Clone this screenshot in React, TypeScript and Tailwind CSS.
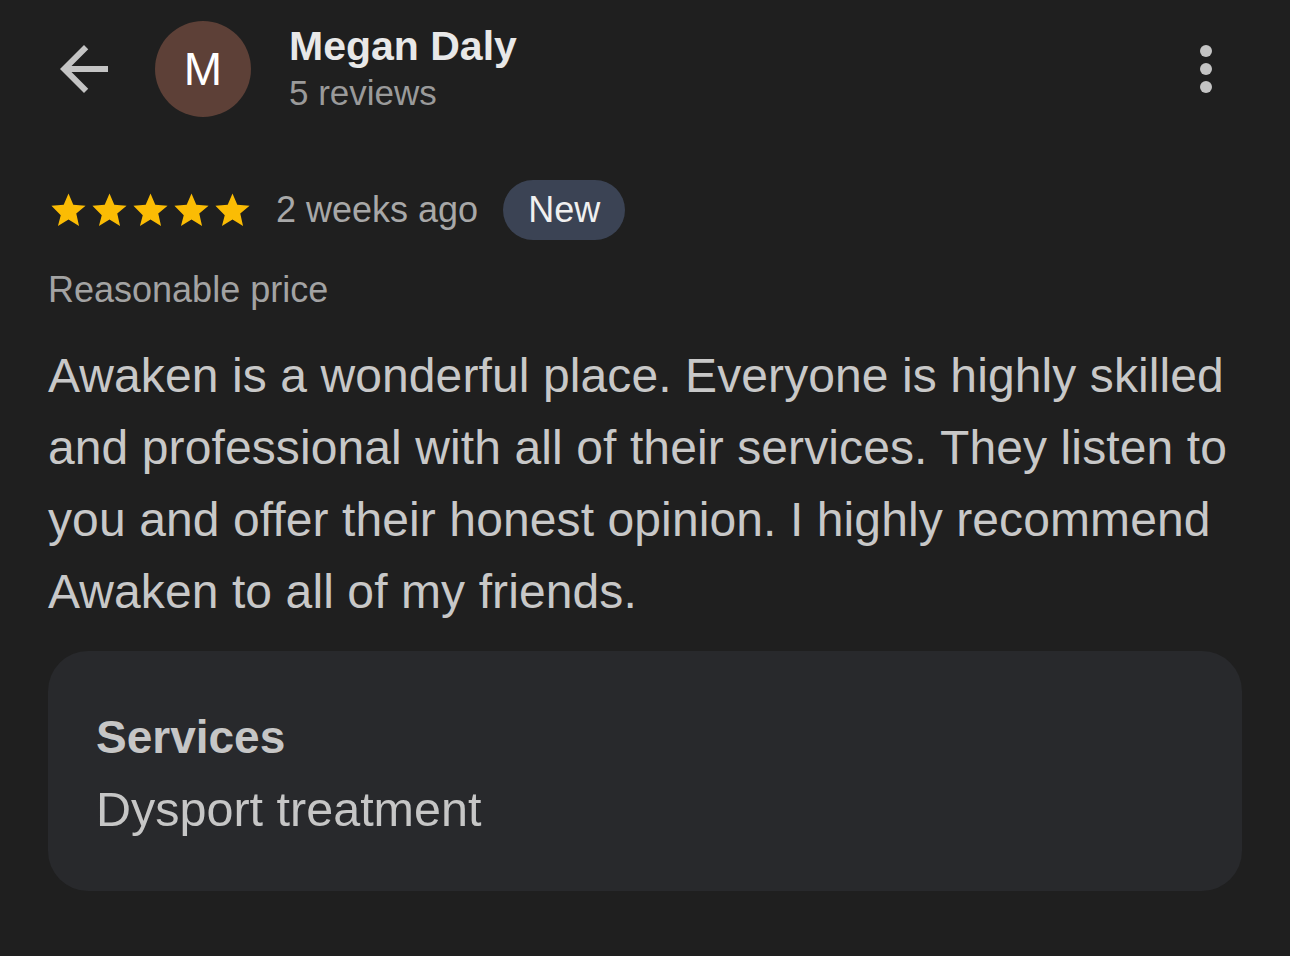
const font = { fontFamily: "'Liberation Sans', Arial, sans-serif" }

function Star() {
  return (
    <svg viewBox="0 0 24 24" className="w-[41px] h-[41px]" fill="#fbbc04">
      <path d="M12 17.27L18.18 21l-1.64-7.19L22 9.24l-7.19-.61L12 2 9.19 8.63 2 9.24l5.46 5.55L5.82 21z" />
    </svg>
  )
}

export default function App() {
  return (
    <div style={font} className="w-[1290px] h-[956px] bg-[#1f1f1f] px-12 pt-[21px] overflow-hidden">
      {/* Header */}
      <div className="flex items-center h-24">
        <svg viewBox="0 0 24 24" className="w-[72px] h-[72px] shrink-0" fill="#c4c4c4">
          <path d="M20 11H7.83l5.59-5.59L12 4l-8 8 8 8 1.41-1.41L7.83 13H20v-2z" />
        </svg>
        <div className="ml-[35px] w-24 h-24 rounded-full bg-[#5d4037] flex items-center justify-center shrink-0">
          <span className="text-[46px] leading-none text-white">M</span>
        </div>
        <div className="ml-[38px] flex flex-col pb-[3px]">
          <span className="text-[41px] leading-[48px] font-bold text-[#e8e8e8]">Megan Daly</span>
          <span className="mt-[3px] text-[35px] leading-[40px] text-[#9a9a9a]">5 reviews</span>
        </div>
        <svg viewBox="0 0 24 24" className="ml-auto w-[72px] h-[72px] shrink-0" fill="#c4c4c4">
          <circle cx="12" cy="6" r="2" />
          <circle cx="12" cy="12" r="2" />
          <circle cx="12" cy="18" r="2" />
        </svg>
      </div>

      {/* Rating row */}
      <div className="mt-[63px] flex items-center h-[60px]">
        <div className="flex">
          <Star />
          <Star />
          <Star />
          <Star />
          <Star />
        </div>
        <span className="ml-[23px] text-[36px] leading-[44px] text-[#a8a8a8]">2 weeks ago</span>
        <span className="ml-[25px] h-[60px] px-[25px] rounded-full bg-[#3b4354] flex items-center text-[36px] text-[#f0f0f0]">
          New
        </span>
      </div>

      <p className="mt-[28px] text-[36px] leading-[44px] text-[#a3a3a3]">Reasonable price</p>

      <p className="mt-[28px] text-[48px] leading-[72px] tracking-[0.1px] text-[#c8c8c8]">
        Awaken is a wonderful place. Everyone is highly skilled and professional with all of their services. They
        listen to you and offer their honest opinion. I highly recommend Awaken to all of my friends.
      </p>

      {/* Services card */}
      <div className="mt-[23px] rounded-[40px] bg-[#28292c] pl-12 pt-14 pb-[52px] flex flex-col">
        <span className="text-[46px] leading-[60px] font-bold text-[#c6c6c6]">Services</span>
        <span className="mt-3 text-[48.5px] leading-[60px] text-[#c6c6c6]">Dysport treatment</span>
      </div>
    </div>
  )
}
